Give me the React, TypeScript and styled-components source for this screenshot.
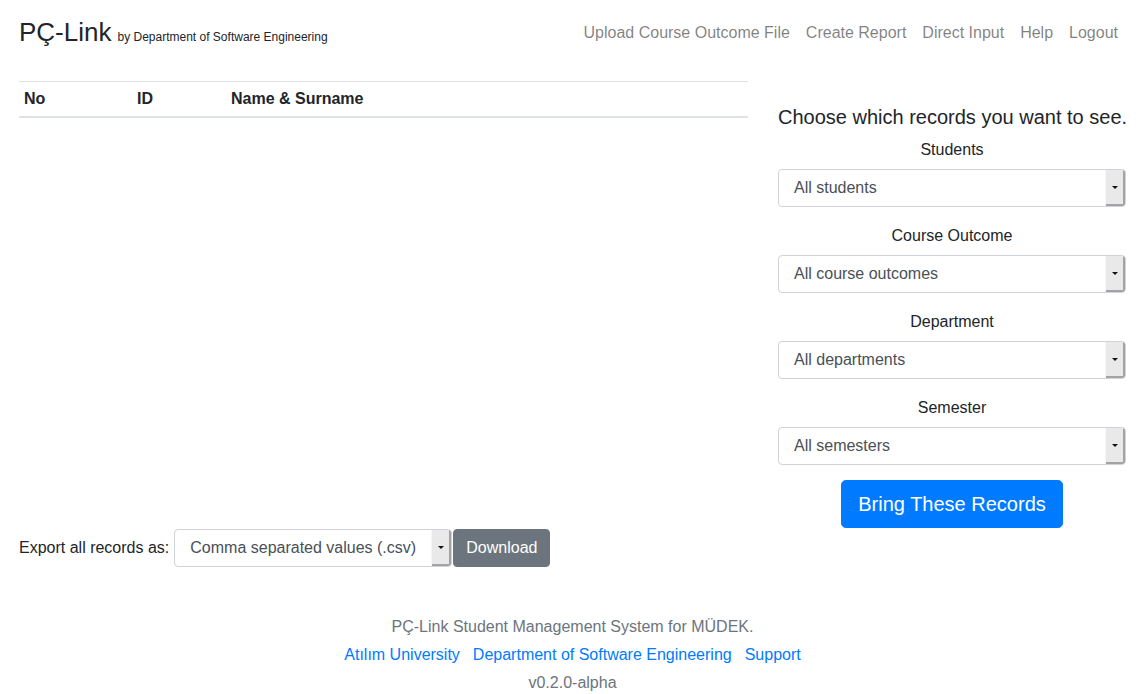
import React from "react";
import styled, { createGlobalStyle } from "styled-components";

const Global = createGlobalStyle`
  html, body { margin: 0; padding: 0; background: #fff; }
  body {
    font-family: "Liberation Sans", Arial, sans-serif;
    font-size: 16px;
    line-height: 1.5;
    color: #212529;
  }
  * { box-sizing: border-box; }
`;

const Page = styled.div`
  padding: 0 19px;
`;

const Header = styled.header`
  display: flex;
  align-items: center;
  justify-content: space-between;
  height: 81px;
  padding-bottom: 16px;
`;

const Brand = styled.div`
  display: flex;
  align-items: baseline;
  gap: 6px;
`;

const BrandName = styled.span`
  font-size: 26px;
  line-height: 1;
  color: #212529;
`;

const BrandSub = styled.span`
  font-size: 12px;
  color: #212529;
`;

const Nav = styled.nav`
  display: flex;
`;

const NavLink = styled.a`
  padding: 0 8px;
  color: rgba(0, 0, 0, 0.5);
  text-decoration: none;
  font-size: 16px;
`;

const Main = styled.div`
  display: flex;
  gap: 30px;
`;

const LeftCol = styled.div`
  width: 729px;
`;

const Table = styled.table`
  width: 100%;
  border-collapse: collapse;
`;

const Th = styled.th<{ $w?: number }>`
  text-align: left;
  font-weight: 700;
  padding: 5px 5px;
  line-height: 24px;
  border-top: 1px solid #dee2e6;
  border-bottom: 2px solid #dee2e6;
  width: ${(p) => (p.$w ? `${p.$w}px` : "auto")};
`;

const RightCol = styled.div`
  width: 348px;
  padding-top: 24px;
  display: flex;
  flex-direction: column;
  align-items: stretch;
`;

const Heading = styled.h5`
  margin: 0 0 8px;
  font-size: 20px;
  font-weight: 400;
  line-height: 24px;
  text-align: center;
  white-space: nowrap;
`;

const Group = styled.div`
  display: flex;
  flex-direction: column;
  margin-bottom: 16px;
`;

const Label = styled.label`
  text-align: center;
  padding-top: 1px;
  margin-bottom: 7px;
  line-height: 24px;
`;

const SelectBox = styled.div<{ $w?: number }>`
  display: flex;
  align-items: stretch;
  height: 38px;
  width: ${(p) => (p.$w ? `${p.$w}px` : "100%")};
  border: 1px solid #ced4da;
  border-radius: 4px;
  background: #fff;
  overflow: hidden;
`;

const SelectText = styled.span`
  flex: 1;
  padding-left: 15px;
  line-height: 36px;
  color: #495057;
  white-space: nowrap;
`;

const Arrow = styled.span`
  width: 20px;
  display: flex;
  align-items: center;
  justify-content: center;
  background: #e9e9e9;
  border-left: 1px solid #f6f6f6;
  box-shadow: inset -2px -2px 0 #a3a3a3;
  &::after {
    content: "";
    display: block;
    margin: -1px 2px 0 0;
    border-left: 3px solid transparent;
    border-right: 3px solid transparent;
    border-top: 3px solid #111;
  }
`;

const PrimaryButton = styled.button`
  align-self: center;
  background: #007bff;
  color: #fff;
  border: 1px solid #007bff;
  border-radius: 4.8px;
  font-family: inherit;
  font-size: 20px;
  line-height: 30px;
  padding: 8px 16px;
  margin-top: -1px;
`;

const ExportRow = styled.div`
  display: flex;
  align-items: center;
  height: 38px;
  margin-top: 1px;
`;

const ExportLabel = styled.span`
  margin-right: 5px;
`;

const SecondaryButton = styled.button`
  margin-left: 1px;
  background: #6c757d;
  color: #fff;
  border: 1px solid #6c757d;
  border-radius: 4px;
  font-family: inherit;
  font-size: 16px;
  line-height: 24px;
  padding: 6px 12px;
`;

const Footer = styled.footer`
  margin-top: 46px;
  text-align: center;
  color: #6c757d;
  line-height: 28px;
`;

const FooterLinks = styled.div`
  display: flex;
  justify-content: center;
  gap: 13px;
`;

const FooterLink = styled.a`
  color: #007bff;
  text-decoration: none;
`;

const Select = ({ value, w }: { value: string; w?: number }) => (
  <SelectBox $w={w}>
    <SelectText>{value}</SelectText>
    <Arrow />
  </SelectBox>
);

const filters = [
  { label: "Students", value: "All students" },
  { label: "Course Outcome", value: "All course outcomes" },
  { label: "Department", value: "All departments" },
  { label: "Semester", value: "All semesters" },
];

export default function App() {
  return (
    <>
      <Global />
      <Page>
        <Header>
          <Brand>
            <BrandName>PÇ-Link</BrandName>
            <BrandSub>by Department of Software Engineering</BrandSub>
          </Brand>
          <Nav>
            <NavLink href="#">Upload Course Outcome File</NavLink>
            <NavLink href="#">Create Report</NavLink>
            <NavLink href="#">Direct Input</NavLink>
            <NavLink href="#">Help</NavLink>
            <NavLink href="#">Logout</NavLink>
          </Nav>
        </Header>
        <Main>
          <LeftCol>
            <Table>
              <thead>
                <tr>
                  <Th $w={113}>No</Th>
                  <Th $w={94}>ID</Th>
                  <Th>Name &amp; Surname</Th>
                </tr>
              </thead>
            </Table>
          </LeftCol>
          <RightCol>
            <Heading>Choose which records you want to see.</Heading>
            {filters.map((f) => (
              <Group key={f.label}>
                <Label>{f.label}</Label>
                <Select value={f.value} />
              </Group>
            ))}
            <PrimaryButton>Bring These Records</PrimaryButton>
          </RightCol>
        </Main>
        <ExportRow>
          <ExportLabel>Export all records as:</ExportLabel>
          <Select value="Comma separated values (.csv)" w={278} />
          <SecondaryButton>Download</SecondaryButton>
        </ExportRow>
        <Footer>
          <div>PÇ-Link Student Management System for MÜDEK.</div>
          <FooterLinks>
            <FooterLink href="#">Atılım University</FooterLink>
            <FooterLink href="#">Department of Software Engineering</FooterLink>
            <FooterLink href="#">Support</FooterLink>
          </FooterLinks>
          <div>v0.2.0-alpha</div>
        </Footer>
      </Page>
    </>
  );
}
